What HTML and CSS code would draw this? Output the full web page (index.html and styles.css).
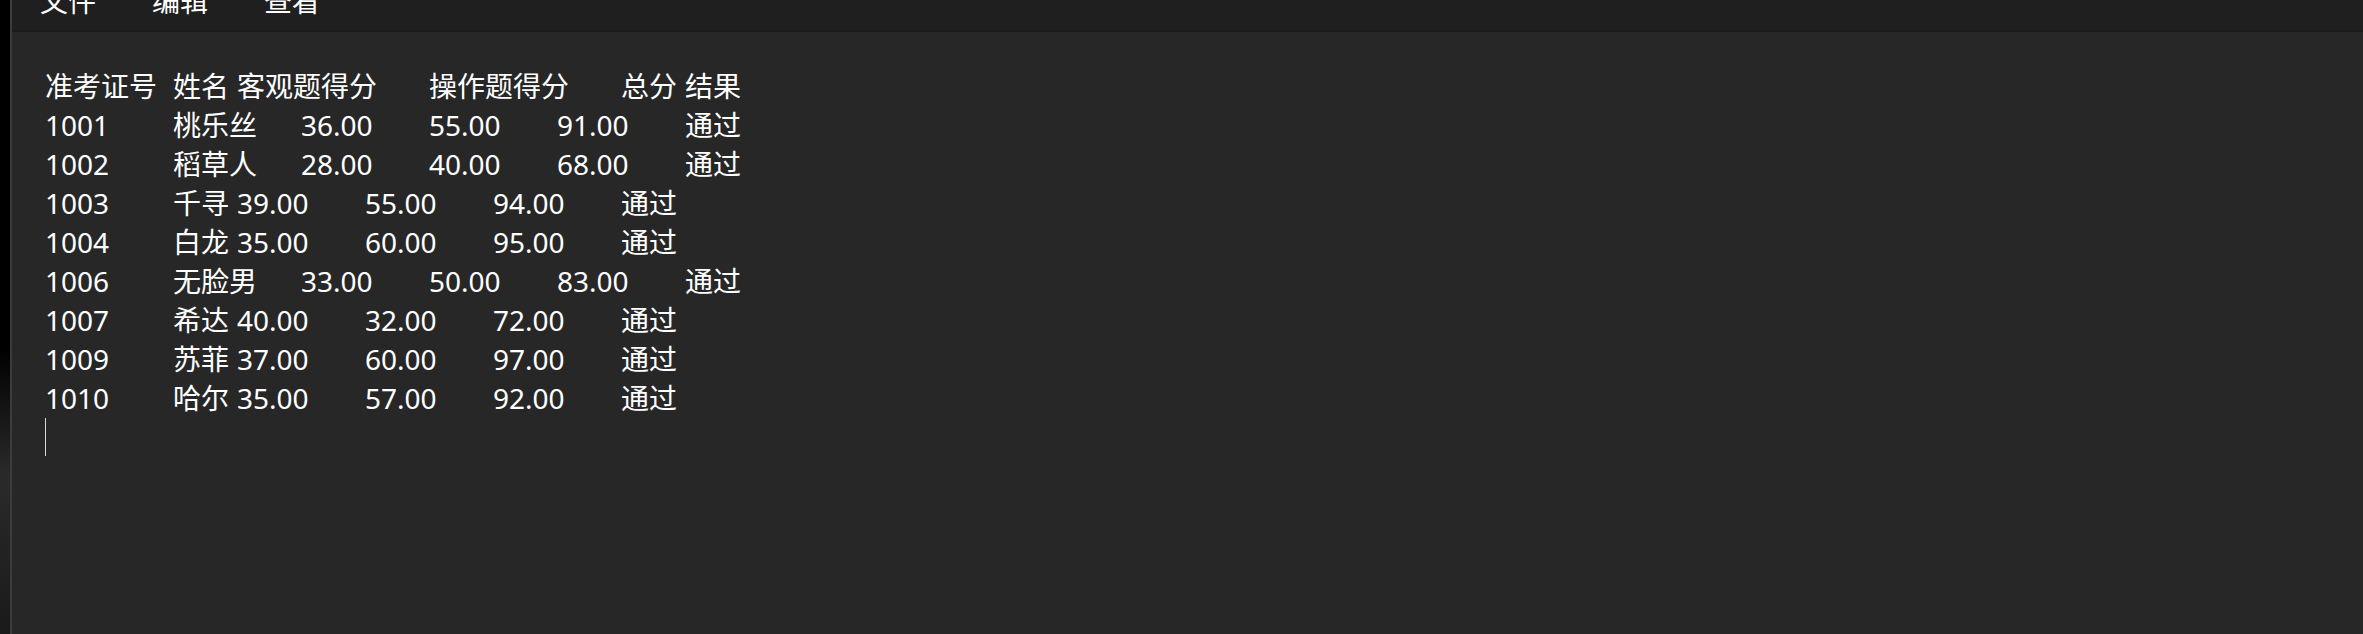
FILE: index.html
```html
<!DOCTYPE html>
<html lang="zh-CN">
<head>
    <meta charset="UTF-8">
    <meta name="viewport" content="width=device-width, initial-scale=1.0">
    <title>成绩.txt - 记事本</title>
    <link rel="stylesheet" href="styles.css">
</head>
<body>
    <div class="desk-edge"></div>
    <div class="window">
        <div class="menubar">
            <span class="menu-item">文件</span>
            <span class="menu-item">编辑</span>
            <span class="menu-item">查看</span>
        </div>
        <div class="editor">
<pre class="text">准考证号	姓名	客观题得分	操作题得分	总分	结果
1001	桃乐丝	36.00	55.00	91.00	通过
1002	稻草人	28.00	40.00	68.00	通过
1003	千寻	39.00	55.00	94.00	通过
1004	白龙	35.00	60.00	95.00	通过
1006	无脸男	33.00	50.00	83.00	通过
1007	希达	40.00	32.00	72.00	通过
1009	苏菲	37.00	60.00	97.00	通过
1010	哈尔	35.00	57.00	92.00	通过</pre>
            <span class="caret"></span>
        </div>
    </div>
</body>
</html>
```

FILE: styles.css
```css
html, body {
    height: 100%;
}
body {
    margin: 0;
    display: flex;
    background-color: #000;
    font-family: 'Noto Sans', 'Noto Sans CJK SC', sans-serif;
    color: #fff;
    overflow: hidden;
}
.desk-edge {
    width: 10px;
    flex-shrink: 0;
    background: linear-gradient(to bottom, #000 0%, #000 55%, #2a2a2a 75%, #1a1a1a 100%);
    border-right: 2px solid #3c3c3c;
}
.window {
    flex: 1;
    display: flex;
    flex-direction: column;
    background-color: #272727;
}
.menubar {
    height: 30px;
    flex-shrink: 0;
    display: flex;
    gap: 56px;
    padding-left: 28px;
    background-color: #1f1f1f;
    border-bottom: 2px solid #1b1b1b;
    overflow: hidden;
}
.menu-item {
    font-size: 28px;
    line-height: 39px;
    margin-top: -18px;
}
.editor {
    flex: 1;
    padding: 35px 0 0 33px;
}
.text {
    margin: 0;
    font-family: inherit;
    font-size: 28px;
    line-height: 39px;
    tab-size: 64px;
    -moz-tab-size: 64px;
    white-space: pre;
}
.caret {
    display: block;
    width: 1px;
    height: 38px;
    background-color: #d8d8d8;
}
```
